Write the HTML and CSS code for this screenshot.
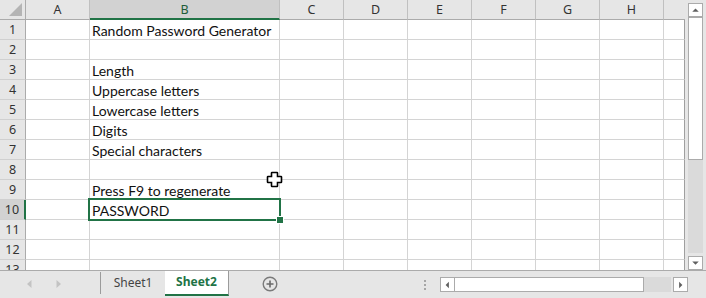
FILE: index.html
```html
<!DOCTYPE html>
<html>
<head>
<meta charset="utf-8">
<link rel="stylesheet" href="styles.css">
</head>
<body>
<div class="app">
  <div class="top">
    <div class="sheet">
      <div class="h corner"><svg width="14" height="14" viewBox="0 0 14 14"><polygon points="0,13 13,13 13,0" fill="#b4b4b4"/></svg></div>
      <div class="h">A</div><div class="h sel-col">B</div><div class="h">C</div><div class="h">D</div><div class="h">E</div><div class="h">F</div><div class="h">G</div><div class="h">H</div><div class="h last"></div>

      <div class="rh">1</div><div class="c"></div><div class="c">Random Password Generator</div><div class="c"></div><div class="c"></div><div class="c"></div><div class="c"></div><div class="c"></div><div class="c"></div><div class="c e"></div>
      <div class="rh">2</div><div class="c"></div><div class="c"></div><div class="c"></div><div class="c"></div><div class="c"></div><div class="c"></div><div class="c"></div><div class="c"></div><div class="c e"></div>
      <div class="rh">3</div><div class="c"></div><div class="c">Length</div><div class="c"></div><div class="c"></div><div class="c"></div><div class="c"></div><div class="c"></div><div class="c"></div><div class="c e"></div>
      <div class="rh">4</div><div class="c"></div><div class="c">Uppercase letters</div><div class="c"></div><div class="c"></div><div class="c"></div><div class="c"></div><div class="c"></div><div class="c"></div><div class="c e"></div>
      <div class="rh">5</div><div class="c"></div><div class="c">Lowercase letters</div><div class="c"></div><div class="c"></div><div class="c"></div><div class="c"></div><div class="c"></div><div class="c"></div><div class="c e"></div>
      <div class="rh">6</div><div class="c"></div><div class="c">Digits</div><div class="c"></div><div class="c"></div><div class="c"></div><div class="c"></div><div class="c"></div><div class="c"></div><div class="c e"></div>
      <div class="rh">7</div><div class="c"></div><div class="c">Special characters</div><div class="c"></div><div class="c"></div><div class="c"></div><div class="c"></div><div class="c"></div><div class="c"></div><div class="c e"></div>
      <div class="rh">8</div><div class="c"></div><div class="c"></div><div class="c"></div><div class="c"></div><div class="c"></div><div class="c"></div><div class="c"></div><div class="c"></div><div class="c e"></div>
      <div class="rh">9</div><div class="c"></div><div class="c">Press F9 to regenerate</div><div class="c"></div><div class="c"></div><div class="c"></div><div class="c"></div><div class="c"></div><div class="c"></div><div class="c e"></div>
      <div class="rh sel-row">10</div><div class="c"></div><div class="c">PASSWORD</div><div class="c"></div><div class="c"></div><div class="c"></div><div class="c"></div><div class="c"></div><div class="c"></div><div class="c e"></div>
      <div class="rh">11</div><div class="c"></div><div class="c"></div><div class="c"></div><div class="c"></div><div class="c"></div><div class="c"></div><div class="c"></div><div class="c"></div><div class="c e"></div>
      <div class="rh">12</div><div class="c"></div><div class="c"></div><div class="c"></div><div class="c"></div><div class="c"></div><div class="c"></div><div class="c"></div><div class="c"></div><div class="c e"></div>
      <div class="rh">13</div><div class="c"></div><div class="c"></div><div class="c"></div><div class="c"></div><div class="c"></div><div class="c"></div><div class="c"></div><div class="c"></div><div class="c e"></div>

      <div class="selection"><span class="handle"></span></div>
      <svg class="cursor" width="17" height="17" viewBox="0 0 17 17"><path d="M6 1.5 H11 Q11.5 1.5 11.5 2 V5.5 H15 Q15.5 5.5 15.5 6 V11 Q15.5 11.5 15 11.5 H11.5 V15 Q11.5 15.5 11 15.5 H6 Q5.5 15.5 5.5 15 V11.5 H2 Q1.5 11.5 1.5 11 V6 Q1.5 5.5 2 5.5 H5.5 V2 Q5.5 1.5 6 1.5 Z" fill="#fff" stroke="#000" stroke-width="1.6"/></svg>
    </div>
    <div class="vscroll">
      <div class="sbtn"><svg width="14" height="14" viewBox="0 0 14 14"><polygon points="3.5,9 10.5,9 7,5.5" fill="#606060"/></svg></div>
      <div class="vthumb"></div>
      <div class="vtrack"></div>
      <div class="sbtn"><svg width="14" height="14" viewBox="0 0 14 14"><polygon points="3.5,5.5 10.5,5.5 7,9" fill="#606060"/></svg></div>
    </div>
  </div>
  <div class="tabbar">
    <div class="nav">
      <svg width="5" height="8" viewBox="0 0 5 8"><polygon points="4.5,0 4.5,8 0,4" fill="#c3c3c3"/></svg>
      <svg width="5" height="8" viewBox="0 0 5 8"><polygon points="0.5,0 0.5,8 5,4" fill="#c3c3c3"/></svg>
    </div>
    <div class="tab">Sheet1</div>
    <div class="tab active">Sheet2</div>
    <svg class="plus" width="16" height="16" viewBox="0 0 16 16"><circle cx="8" cy="8" r="6.8" fill="none" stroke="#7a7a7a" stroke-width="1.4"/><path d="M8 4.5 V11.5 M4.5 8 H11.5" stroke="#6a6a6a" stroke-width="1.6"/></svg>
    <div class="dots"><i></i><i></i><i></i></div>
    <div class="hscroll">
      <div class="hbtn"><svg width="14" height="14" viewBox="0 0 14 14"><polygon points="8.5,3.5 8.5,10.5 5,7" fill="#606060"/></svg></div>
      <div class="hthumb"></div>
      <div class="htrack"></div>
      <div class="hbtn right"><svg width="14" height="14" viewBox="0 0 14 14"><polygon points="5.5,3.5 5.5,10.5 9,7" fill="#606060"/></svg></div>
    </div>
  </div>
</div>
</body>
</html>
```
FILE: styles.css
```css
* { box-sizing: border-box; }
body {
  margin: 0;
  width: 706px;
  height: 298px;
  overflow: hidden;
  background: #e6e6e6;
  font-family: "Noto Sans", sans-serif;
}
.app { display: flex; flex-direction: column; height: 298px; }
.top { display: flex; height: 270px; }
.sheet {
  position: relative;
  width: 685px;
  height: 270px;
  overflow: hidden;
  background: #fff;
  display: grid;
  grid-template-columns: 26px 64px 190px repeat(6, 64px) 21px;
  grid-auto-rows: 20px;
  align-content: start;
}
.h {
  background: #e6e6e6;
  border-right: 1px solid #c0c0c0;
  border-bottom: 1px solid #ababab;
  font-size: 12.5px;
  color: #333;
  text-align: center;
  line-height: 19px;
}
.h.corner { display: flex; align-items: flex-end; justify-content: flex-end; padding: 0 2px 2px 0; border-right-color: #ababab; }
.h.corner svg { display: block; }
.h.last { border-right: none; }
.h.sel-col { background: #d2d2d2; border-bottom: 2px solid #217346; color: #1d5c39; }
.rh {
  background: #e6e6e6;
  border-right: 1px solid #ababab;
  border-bottom: 1px solid #d0d0d0;
  font-size: 12.5px;
  color: #333;
  text-align: center;
  line-height: 20px;
}
.rh.sel-row { background: #d2d2d2; border-right: 2px solid #217346; }
.c {
  border-right: 1px solid #d4d4d4;
  border-bottom: 1px solid #d4d4d4;
  font-family: Lato, "Liberation Sans", sans-serif;
  font-size: 14px;
  color: #111;
  padding-left: 2px;
  line-height: 21px;
  white-space: nowrap;
}
.c.e { border-right-color: #9f9f9f; }
.selection {
  position: absolute;
  left: 88px;
  top: 198px;
  width: 193px;
  height: 23px;
  border: 2px solid #217346;
}
.handle {
  position: absolute;
  right: -4px;
  bottom: -4px;
  width: 6px;
  height: 6px;
  background: #217346;
  outline: 1px solid #fff;
}
.cursor { position: absolute; left: 266px; top: 171px; }

.vscroll {
  width: 21px;
  padding: 3px 3px 0 3px;
  display: flex;
  flex-direction: column;
}
.sbtn {
  height: 14px;
  width: 15px;
  background: #fff;
  border: 1px solid #ababab;
  display: flex; align-items: center; justify-content: center;
}
.vthumb {
  height: 143px;
  background: #fff;
  border: 1px solid #ababab;
}
.vtrack { flex: 1; background: #dadada; margin-bottom: 3px; }

.tabbar {
  height: 28px;
  border-top: 1px solid #ababab;
  display: flex;
  align-items: flex-start;
}
.nav {
  width: 100px;
  display: flex;
  align-items: center;
  gap: 24px;
  padding: 9px 0 0 27px;
}
.nav svg { display: block; }
.tab {
  width: 65px;
  height: 22px;
  margin-top: 1px;
  border-left: 1px solid #9b9b9b;
  font-size: 12px;
  color: #444;
  text-align: center;
  line-height: 21px;
}
.tab.active {
  width: 64px;
  height: 25px;
  margin-top: 0;
  border-left: none;
  border-right: 1px solid #9b9b9b;
  background: #fff;
  border-bottom: 2px solid #217346;
  color: #217346;
  font-weight: bold;
  line-height: 22px;
}
.plus { display: block; margin: 5px 0 0 33px; }
.dots {
  margin: 9px 0 0 146px;
  width: 2px;
  display: flex;
  flex-direction: column;
  gap: 2px;
}
.dots i { display: block; width: 2px; height: 2px; background: #a6a6a6; }
.hscroll {
  margin: 6px 0 0 14px;
  height: 15px;
  display: flex;
}
.hbtn {
  width: 15px;
  height: 15px;
  background: #fff;
  border: 1px solid #ababab;
  display: flex; align-items: center; justify-content: center;
}
.hbtn.right { margin-left: 2px; }
.hthumb {
  width: 190px;
  background: #fff;
  border: 1px solid #ababab;
  margin-left: -1px;
}
.htrack { width: 27px; background: #dadada; }
```
